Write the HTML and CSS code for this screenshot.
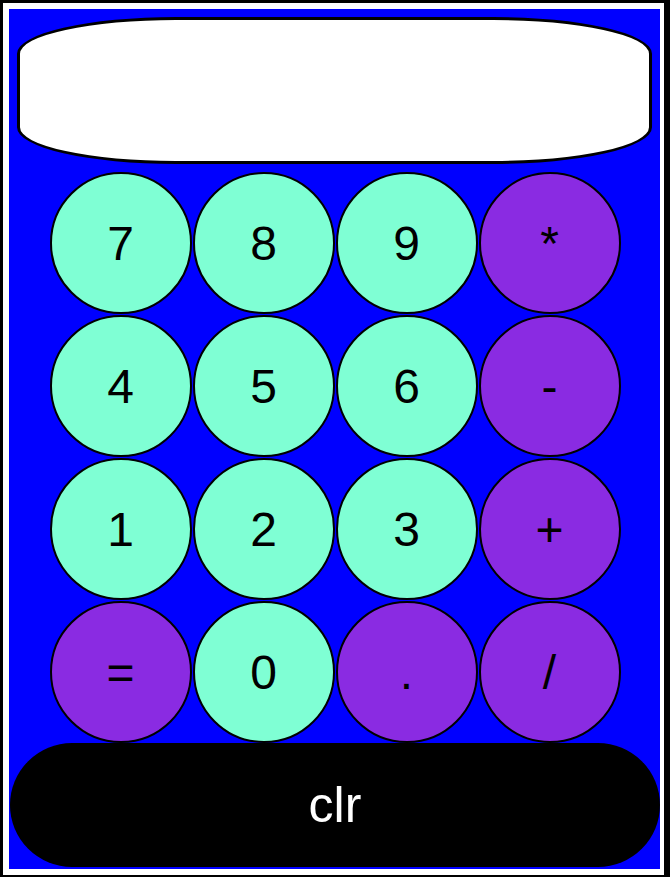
FILE: index.html
```html
<!DOCTYPE html>
<html>
<head>
<meta charset="utf-8">
<link rel="stylesheet" href="styles.css">
</head>
<body>
<div class="frame">
  <div class="calc">
    <div class="display"></div>
    <div class="keys">
      <button class="key num">7</button>
      <button class="key num">8</button>
      <button class="key num">9</button>
      <button class="key op">*</button>
      <button class="key num">4</button>
      <button class="key num">5</button>
      <button class="key num">6</button>
      <button class="key op">-</button>
      <button class="key num">1</button>
      <button class="key num">2</button>
      <button class="key num">3</button>
      <button class="key op">+</button>
      <button class="key op">=</button>
      <button class="key num">0</button>
      <button class="key op">.</button>
      <button class="key op">/</button>
    </div>
    <button class="clr">clr</button>
  </div>
</div>
</body>
</html>
```
FILE: styles.css
```css
html, body {
  margin: 0;
  height: 100%;
}
body {
  background: #000;
  padding: 3px 6px 2px 3px;
  box-sizing: border-box;
  font-family: "Liberation Sans", Arial, sans-serif;
}
.frame {
  background: #fff;
  height: 100%;
  box-sizing: border-box;
  padding: 6px 4px 6px 6px;
}
.calc {
  background: #0000ff;
  height: 100%;
  box-sizing: border-box;
  padding: 8px 0 2px 1px;
  display: flex;
  flex-direction: column;
}
.display {
  box-sizing: border-box;
  height: 147px;
  margin: 0 8px 0 7px;
  background: #fff;
  border: 3px solid #000;
  border-radius: 25%;
}
.keys {
  margin-top: 8px;
  display: grid;
  grid-template-columns: repeat(4, 142px);
  grid-auto-rows: 142px;
  gap: 1px;
  justify-content: center;
}
.key {
  box-sizing: border-box;
  width: 142px;
  height: 142px;
  border: 2px solid #000;
  border-radius: 50%;
  font-family: "Liberation Sans", Arial, sans-serif;
  font-size: 48px;
  color: #000;
  padding: 0;
  margin: 0;
}
.num { background: #7fffd4; }
.op { background: #8a2be2; }
.clr {
  box-sizing: border-box;
  width: 650px;
  height: 124px;
  border: none;
  border-radius: 62px;
  background: #000;
  color: #fff;
  font-family: "Liberation Sans", Arial, sans-serif;
  font-size: 50px;
  padding: 0;
  margin: 0;
}
```
